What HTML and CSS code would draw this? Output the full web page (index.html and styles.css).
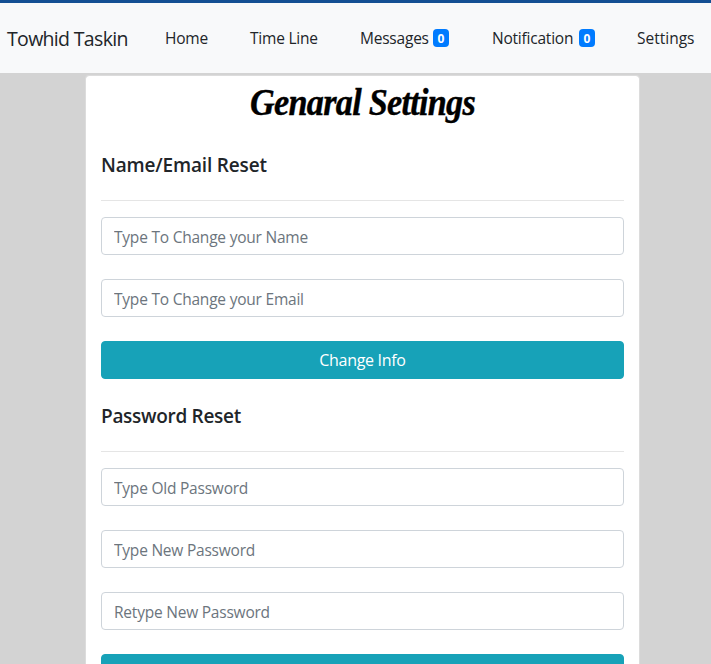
FILE: index.html
```html
<!DOCTYPE html>
<html lang="en">
<head>
<meta charset="utf-8">
<title>Genaral Settings</title>
<link rel="stylesheet" href="styles.css">
</head>
<body>
<header class="navbar">
  <a class="brand">Towhid Taskin</a>
  <nav class="links">
    <a class="home">Home</a>
    <a class="timeline">Time Line</a>
    <a class="messages"><span>Messages</span><span class="badge">0</span></a>
    <a class="notification"><span>Notification</span><span class="badge">0</span></a>
    <a class="settings">Settings</a>
  </nav>
</header>
<main class="card">
  <h1 class="title"><span>Genaral Settings</span></h1>
  <form class="group">
    <h5 class="heading name-heading">Name/Email Reset</h5>
    <hr>
    <input type="text" placeholder="Type To Change your Name">
    <input type="text" placeholder="Type To Change your Email">
    <button type="button">Change Info</button>
  </form>
  <form class="group">
    <h5 class="heading password-heading">Password Reset</h5>
    <hr>
    <input type="password" placeholder="Type Old Password">
    <input type="password" placeholder="Type New Password">
    <input type="password" placeholder="Retype New Password">
    <button type="button"></button>
  </form>
</main>
</body>
</html>
```
FILE: styles.css
```css
* { box-sizing: border-box; }
body {
  height: 664px;
  margin: 0;
  display: flex;
  flex-direction: column;
  overflow: hidden;
  background: #d3d3d3;
  color: #212529;
  font: 400 16px/24px "Open Sans", "Noto Sans", sans-serif;
}
.navbar {
  flex: none;
  height: 73px;
  display: flex;
  align-items: center;
  padding-left: 7px;
  background: #f8f9fa;
  border-top: 3px solid #134f93;
  white-space: nowrap;
}
.brand { width: 158px; padding-top: 2px; font-size: 19.5px; letter-spacing: -.67px; }
.links { display: flex; font-size: 15.5px; letter-spacing: -.22px; }
.links a { display: flex; align-items: center; }
.home { width: 85px; }
.timeline { width: 110px; }
.messages { width: 132px; }
.notification { width: 145px; }
.settings { letter-spacing: 0; }
.messages span:first-child { width: 73px; }
.notification span:first-child { width: 87px; }
.badge {
  width: 16px;
  height: 18px;
  border-radius: 4px;
  background: #007bff;
  color: #fff;
  font-size: 12px;
  font-weight: 700;
  line-height: 19px;
  text-align: center;
  letter-spacing: 0;
}
.card {
  flex: 1;
  width: 555px;
  min-height: 0;
  margin: 2px 0 0 85px;
  padding: 0 15px;
  overflow: hidden;
  background: #fff;
  background-clip: padding-box;
  border: 1px solid #dcdcdc;
  border-bottom: 0;
  border-radius: 4px 4px 0 0;
}
.title {
  height: 77px;
  margin: 0;
  color: #000;
  font: italic 700 37px/54px "Liberation Serif", serif;
  letter-spacing: -.8px;
  text-align: center;
  white-space: nowrap;
}
.title span {
  display: inline-block;
  transform: scaleX(.925);
  -webkit-text-stroke: .4px #000;
}
.group { margin: 0; }
.group + .group { padding-top: 1px; }
.heading {
  height: 24px;
  margin: 0 0 23px;
  font-size: 19px;
  font-weight: 600;
}
.name-heading { letter-spacing: -.17px; }
.password-heading { letter-spacing: -.3px; }
hr {
  height: 1px;
  margin: 0 0 16px;
  border: 0;
  background: #e5e5e5;
}
input, button {
  display: block;
  width: 100%;
  height: 38px;
  margin: 0 0 24px;
  border: 1px solid #ced4da;
  border-radius: 4px;
  font: inherit;
  letter-spacing: -.3px;
}
input { padding: 2px 12px 0; font-size: 15.5px; letter-spacing: -.22px; background: #fff; }
input::placeholder { color: #6c757d; opacity: 1; }
button { padding: 0; color: #fff; background: #17a2b8; border-color: #17a2b8; }
```
